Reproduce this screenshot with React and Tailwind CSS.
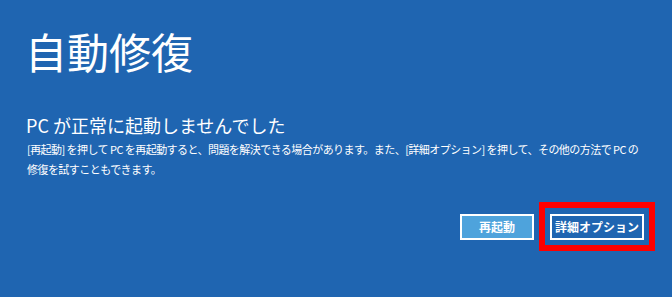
import React from "react";

const font = { fontFamily: '"Noto Sans CJK JP", "Noto Sans", sans-serif' };

export default function App() {
  return (
    <div
      className="w-[672px] h-[297px] bg-[#1f65b1] text-white flex flex-col overflow-hidden"
      style={font}
    >
      <h1 className="pl-[25px] pt-[25px] text-[42px] leading-[52px] font-normal">自動修復</h1>

      <h2 className="pl-[26px] mt-[36px] text-[18px] leading-[24px] font-normal">
        PC が正常に起動しませんでした
      </h2>
      <p className="pl-[27px] mt-[2px] text-[11px] leading-[20px] tracking-[-0.55px] whitespace-nowrap">
        [再起動] を押して PC を再起動すると、問題を解決できる場合があります。また、[詳細オプション] を押して、その他の方法で PC の
        <br />
        修復を試すこともできます。
      </p>

      <div className="mt-[23px] pr-[17px] flex items-center justify-end gap-[5px]">
        <button className="w-[74px] h-[26px] border-2 border-white bg-[#4ea3dc] text-[12px] font-bold text-white">
          再起動
        </button>
        <div className="border-[6px] border-[#ff0000] p-[5px]">
          <button className="w-[94px] h-[26px] border-2 border-white bg-[#1f65b1] text-[12px] font-bold text-white">
            詳細オプション
          </button>
        </div>
      </div>
    </div>
  );
}
